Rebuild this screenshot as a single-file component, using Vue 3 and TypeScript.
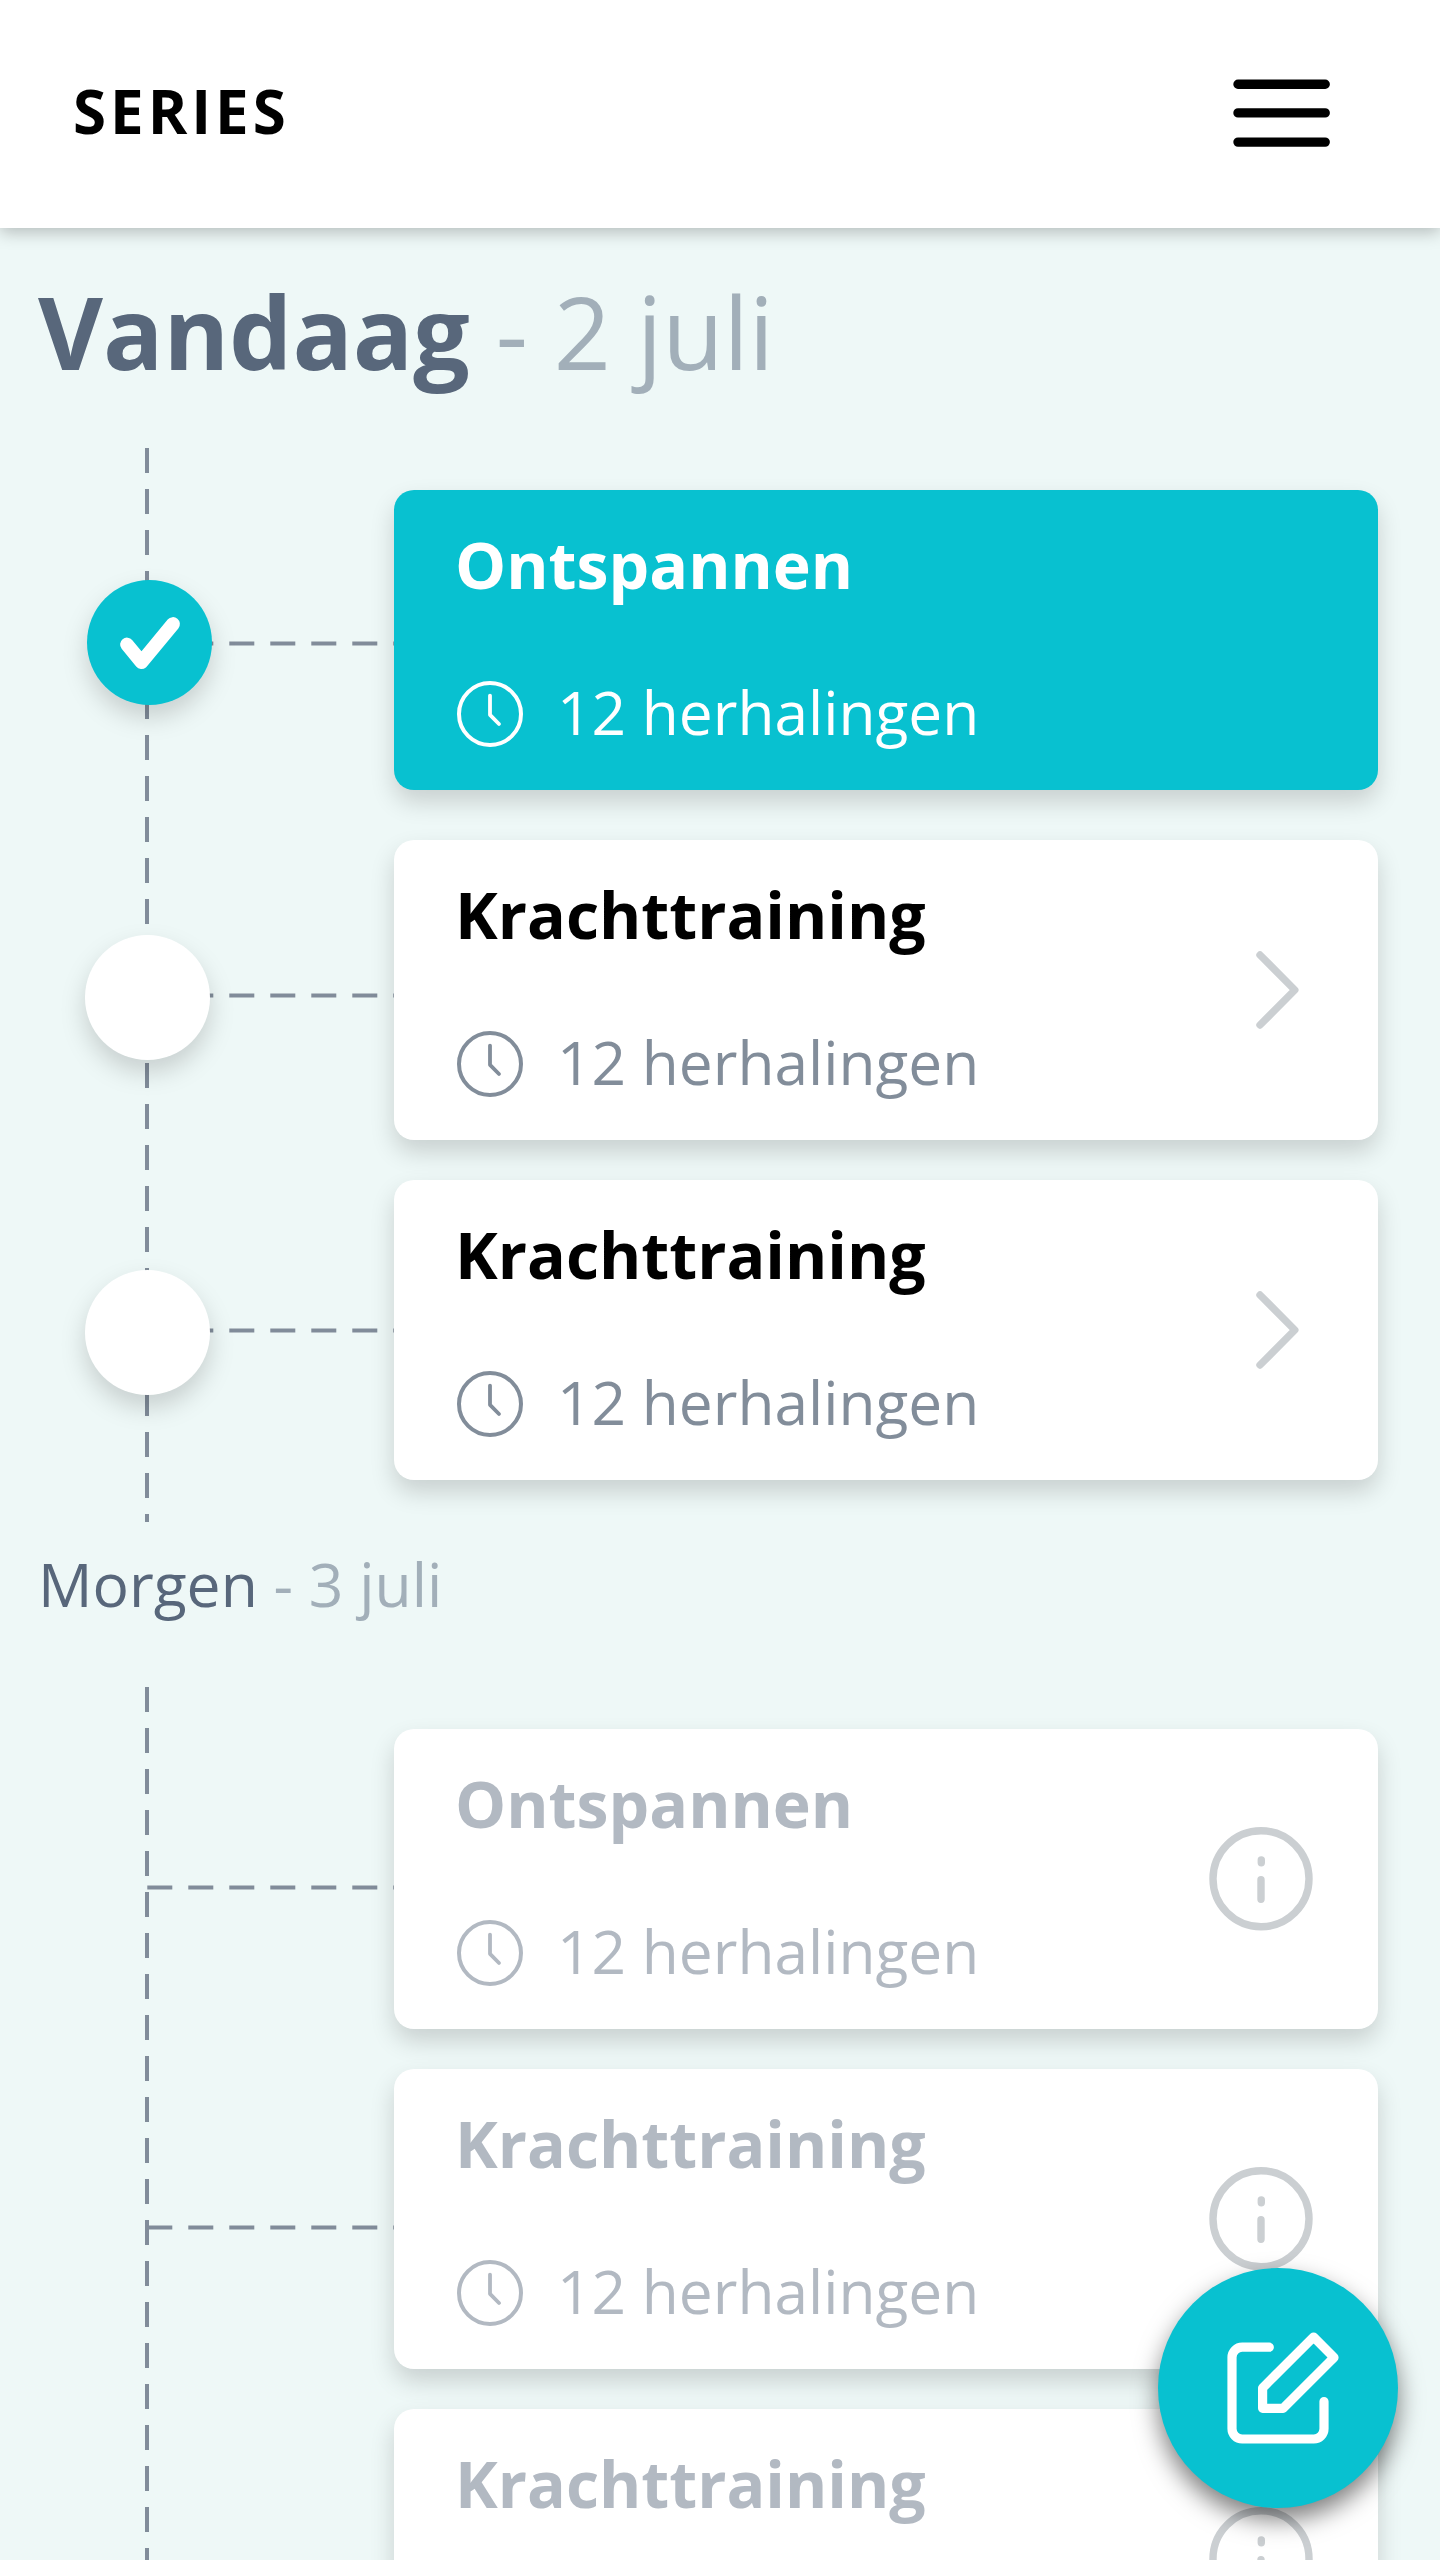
<script setup lang="ts">
type Marker = 'done' | 'open' | 'none'
type Trailing = 'none' | 'chevron' | 'info'

interface Exercise {
  title: string
  detail: string
  tone: 'active' | 'normal' | 'muted'
  trailing: Trailing
}

interface Branch {
  y: number
  marker: Marker
  markerX: number
  markerY: number
}

interface Day {
  name: string
  date: string
  today: boolean
  railHeight: number
  branches: Branch[]
  exercises: Exercise[]
}

const detail = '12 herhalingen'

const days: Day[] = [
  {
    name: 'Vandaag',
    date: '- 2 juli',
    today: true,
    railHeight: 1074,
    branches: [
      { y: 195.4, marker: 'done', markerX: 149.5, markerY: 194.5 },
      { y: 547.5, marker: 'open', markerX: 147.5, markerY: 549.5 },
      { y: 882.5, marker: 'open', markerX: 147.5, markerY: 884.5 },
    ],
    exercises: [
      { title: 'Ontspannen', detail, tone: 'active', trailing: 'none' },
      { title: 'Krachttraining', detail, tone: 'normal', trailing: 'chevron' },
      { title: 'Krachttraining', detail, tone: 'normal', trailing: 'chevron' },
    ],
  },
  {
    name: 'Morgen',
    date: '- 3 juli',
    today: false,
    railHeight: 1074,
    branches: [
      { y: 200.4, marker: 'none', markerX: 0, markerY: 0 },
      { y: 540.4, marker: 'none', markerX: 0, markerY: 0 },
      { y: 880.4, marker: 'none', markerX: 0, markerY: 0 },
    ],
    exercises: [
      { title: 'Ontspannen', detail, tone: 'muted', trailing: 'info' },
      { title: 'Krachttraining', detail, tone: 'muted', trailing: 'info' },
      { title: 'Krachttraining', detail: '', tone: 'muted', trailing: 'info' },
    ],
  },
]
</script>

<template>
  <div class="screen">
    <header class="topbar">
      <h1 class="brand">SERIES</h1>
      <button class="menu" type="button" aria-label="Menu">
        <svg width="98" height="70" viewBox="0 0 98 70" fill="none" stroke="#000" stroke-width="9.4" stroke-linecap="round">
          <path d="M6 6.2H93.2M6 34.9H93.2M6 64.1H93.2" />
        </svg>
      </button>
    </header>

    <main>
      <section v-for="day in days" :key="day.name" class="day" :class="{ today: day.today }">
        <h2 class="day-title">
          <span class="day-name">{{ day.name }}</span>
          <span class="day-date">{{ ' ' + day.date }}</span>
        </h2>

        <div class="timeline">
          <svg class="rail" width="394" :height="day.railHeight" :viewBox="`0 0 394 ${day.railHeight}`">
            <g class="dashes">
              <line x1="147" y1="0" x2="147" :y2="day.railHeight" />
              <line v-for="b in day.branches" :key="b.y" x1="147.3" :y1="b.y" x2="396" :y2="b.y" />
            </g>
            <template v-for="b in day.branches" :key="b.y">
              <circle
                v-if="b.marker !== 'none'"
                class="marker"
                :class="b.marker"
                :cx="b.markerX"
                :cy="b.markerY"
                r="62.5"
              />
              <path v-if="b.marker === 'done'" class="tick" d="M127 196.5L141.5 214.2L173 176" />
            </template>
          </svg>

          <div class="cards">
            <article v-for="(ex, i) in day.exercises" :key="i" class="card" :class="ex.tone">
              <div class="info">
                <h3 class="title">{{ ex.title }}</h3>
                <p v-if="ex.detail" class="detail">
                  <svg class="clock" width="66" height="66" viewBox="0 0 66 66" fill="none" stroke="currentColor" stroke-width="4" stroke-linecap="round" stroke-linejoin="round">
                    <circle cx="33" cy="33" r="31" />
                    <path d="M33 14.6V33.8L42 43" stroke-width="3.8" />
                  </svg>
                  <span>{{ ex.detail }}</span>
                </p>
              </div>
              <svg v-if="ex.trailing === 'chevron'" class="trailing" width="104" height="104" viewBox="0 0 104 104">
                <path d="M51 17L85.8 52L51 87" />
              </svg>
              <svg v-else-if="ex.trailing === 'info'" class="trailing" width="104" height="104" viewBox="0 0 104 104">
                <circle cx="52" cy="51.8" r="48" />
                <path d="M52.3 33V35.8M52 52.7V72.3" />
              </svg>
            </article>
          </div>
        </div>
      </section>
    </main>

    <button class="fab" type="button" aria-label="Bewerken">
      <svg width="240" height="240" viewBox="0 0 240 240" fill="none" stroke="#fff" stroke-width="9.2" stroke-linecap="round" stroke-linejoin="round">
        <path d="M111.3 79.2H84.2A10.2 10.2 0 0 0 74 89.4V160.8A10.2 10.2 0 0 0 84.2 171H155.8A10.2 10.2 0 0 0 166 160.8V133.5" />
        <path d="M155.6 69L176 89.4L125.2 140.3H104.6V119.9Z" />
      </svg>
    </button>
  </div>
</template>

<style>
body {
  margin: 0;
  background: #eef8f7;
}
</style>

<style scoped>
.screen {
  position: relative;
  width: 1440px;
  height: 2560px;
  overflow: hidden;
  background: #eef8f7;
  font-family: 'Open Sans', 'Noto Sans', sans-serif;
}

h1,
h2,
h3,
p {
  margin: 0;
  font-weight: 400;
}

button {
  display: block;
  padding: 0;
  border: 0;
  background: none;
}

svg {
  display: block;
  flex: none;
}

.topbar {
  box-sizing: border-box;
  display: flex;
  align-items: flex-start;
  justify-content: space-between;
  height: 228px;
  padding: 71px 110px 0 73px;
  background: #fff;
  box-shadow: 0 4px 16px rgba(0, 0, 0, 0.25);
}

.brand {
  color: #000;
  font-size: 60px;
  font-weight: 700;
  line-height: 80px;
  letter-spacing: 4px;
}

.menu {
  margin-top: 7px;
}

.day-title {
  box-sizing: border-box;
  height: 165px;
  padding: 22px 38px 0;
  font-size: 60.6px;
  line-height: 80px;
  white-space: nowrap;
}

.today .day-title {
  height: 220px;
  padding-top: 43px;
  font-size: 100px;
  line-height: 120px;
}

.day-name {
  color: #58677b;
}

.today .day-name {
  font-weight: 700;
}

.day-date {
  color: #a2afb9;
}

.timeline {
  display: flex;
}

.rail {
  overflow: visible;
}

.dashes line {
  stroke: #818c9a;
  stroke-width: 4;
  stroke-dasharray: 25 16;
}

.marker {
  filter: drop-shadow(0 12px 12px rgba(0, 0, 0, 0.16));
}

.marker.done {
  fill: #08c1d0;
}

.marker.open {
  fill: #fff;
}

.tick {
  fill: none;
  stroke: #fff;
  stroke-width: 13.8;
  stroke-linecap: round;
  stroke-linejoin: round;
}

.cards {
  display: flex;
  flex-direction: column;
  gap: 40px;
  width: 984px;
  padding-top: 42px;
}

.card {
  box-sizing: border-box;
  display: flex;
  align-items: center;
  justify-content: space-between;
  height: 300px;
  padding: 0 65px 0 61px;
  border-radius: 20px;
  background: #fff;
  box-shadow: 0 12px 24px rgba(0, 0, 0, 0.16);
}

.card.active {
  margin-bottom: 10px;
  background: #08c1d0;
}

.info {
  align-self: flex-start;
  padding-top: 34px;
}

.title {
  color: #000;
  font-size: 64.4px;
  font-weight: 700;
  line-height: 80px;
}

.detail {
  display: flex;
  align-items: center;
  gap: 34px;
  margin-top: 68px;
  padding-left: 2px;
  color: #828d9a;
  font-size: 60.4px;
  line-height: 80px;
}

.clock {
  margin-top: 4px;
}

.active .title,
.active .detail {
  color: #fff;
}

.muted .title,
.muted .detail {
  color: #b2b9c2;
}

.trailing {
  fill: none;
  stroke: #cbcfd2;
  stroke-width: 7.4;
  stroke-linecap: round;
  stroke-linejoin: round;
}

.fab {
  position: absolute;
  top: 2268px;
  left: 1158px;
  width: 240px;
  height: 240px;
  border-radius: 50%;
  background: #08c1d0;
  box-shadow: 0 12px 24px rgba(0, 0, 0, 0.5);
}
</style>
